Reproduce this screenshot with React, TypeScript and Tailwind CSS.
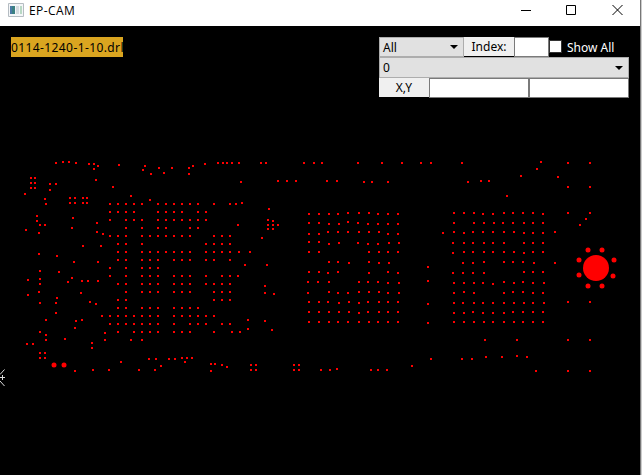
import React from "react";

/** Drill holes of the board, keyed by the top edge of each 2px mark. */
const SCATTER: [number, number[]][] = [
  [161, [62, 68, 540]],
  [162, [55, 75, 217, 222, 226, 231, 238, 260, 265, 303, 313, 321, 357, 381, 401, 420, 430, 461, 567, 589]],
  [163, [88, 93, 204]],
  [164, [118]],
  [165, [97, 144, 192]],
  [167, [158, 171, 188]],
  [168, [93, 536]],
  [169, [142]],
  [172, [163]],
  [173, [150, 188]],
  [175, [520]],
  [176, [557]],
  [177, [30, 34]],
  [179, [95]],
  [180, [277, 286, 295, 326, 336, 480, 488]],
  [181, [240, 363, 371, 387, 467]],
  [182, [30, 34]],
  [183, [49, 55]],
  [186, [112, 567, 589]],
  [187, [30, 34]],
  [189, [49]],
  [193, [24]],
  [195, [130, 506]],
  [197, [69, 74, 82, 86]],
  [198, [44]],
  [199, [149]],
  [202, [69, 74, 82, 86, 241]],
  [203, [45, 235]],
  [208, [268]],
  [212, [347, 358, 368, 453, 463, 473, 503, 512, 522, 532, 567, 589]],
  [213, [308, 318, 328, 337, 377, 387, 397, 482, 492, 542]],
  [215, [36]],
  [217, [72]],
  [218, [585]],
  [219, [267]],
  [220, [36, 272]],
  [221, [347]],
  [222, [96, 308, 318, 357, 453, 473, 483, 493, 502, 512, 523, 532, 542]],
  [223, [328, 338, 367, 377, 387, 397]],
  [224, [39, 44, 237, 267, 272, 277, 579]],
  [227, [71]],
  [228, [267, 272]],
  [229, [25]],
  [231, [96, 327, 337, 347, 358, 368, 378, 453, 472, 482, 492, 503, 513, 554]],
  [232, [38, 442, 463, 523, 532, 542]],
  [233, [102, 308, 318, 387, 397]],
  [237, [261]],
  [241, [308, 318]],
  [242, [338, 357, 388, 398, 452, 463, 472, 483, 492, 503, 523, 532, 542]],
  [243, [328, 367, 377]],
  [245, [82, 100]],
  [251, [238, 249, 308, 318, 368, 378, 387, 397, 463, 472, 483, 492, 503, 513, 532, 542]],
  [252, [452, 523]],
  [253, [38]],
  [255, [56]],
  [261, [73, 97, 328, 337, 368, 483, 503, 512, 522]],
  [262, [348, 378, 388, 462, 472, 533, 554]],
  [264, [244, 266]],
  [266, [427]],
  [270, [39]],
  [271, [58, 308, 318, 337, 387, 523, 532, 542]],
  [272, [327, 368, 397, 452, 462, 472, 483]],
  [275, [237]],
  [277, [71]],
  [278, [39]],
  [279, [27]],
  [280, [81, 87, 97, 427]],
  [281, [67, 307, 317, 328, 358, 367, 377, 503, 522]],
  [282, [387, 398, 453, 463, 473, 482, 513, 532, 543]],
  [283, [39, 492]],
  [285, [264]],
  [291, [38, 328, 358, 368, 378, 463, 512, 522]],
  [292, [80, 264, 307, 337, 347, 387, 398, 453, 473, 503, 532, 542]],
  [293, [273]],
  [294, [27]],
  [297, [56]],
  [301, [89, 308, 318, 327, 348, 367, 378, 387, 397, 567, 589]],
  [302, [39, 55, 338, 358, 453, 462, 473, 482, 492, 503, 513, 523, 532, 543]],
  [303, [95, 427]],
  [311, [308, 318, 328, 338, 348, 367, 378, 387, 397, 472, 512, 522, 532, 542]],
  [312, [55, 358, 453, 463, 482, 492, 503]],
  [315, [101]],
  [319, [45, 81, 247]],
  [320, [75, 264]],
  [321, [308, 318, 328, 337, 347, 358, 368, 377, 387, 397, 453, 463, 473, 483, 492, 503, 513, 522, 532, 542]],
  [322, [427]],
  [327, [74]],
  [328, [247]],
  [329, [271]],
  [331, [39, 231, 239]],
  [332, [104]],
  [334, [45]],
  [338, [64]],
  [339, [45, 104, 130, 141, 484, 516, 567, 589]],
  [342, [91]],
  [343, [26, 32]],
  [347, [91]],
  [352, [39, 44]],
  [355, [516]],
  [356, [485, 501, 526]],
  [357, [39, 44, 181, 186, 191]],
  [358, [148, 155, 168, 174, 430, 461, 471]],
  [361, [120, 184]],
  [363, [210, 214]],
  [364, [221, 250, 255, 293, 298]],
  [365, [160, 411]],
  [366, [226]],
  [368, [336]],
  [369, [92, 108, 138, 154, 250, 255, 293, 298, 320, 329, 370, 377, 386]],
  [370, [74, 210, 535, 567, 589]],
];

/** Ball grid on the left: 8px pitch, starting at (109, 203). */
const GRID = [
  "#####.######.#.#",
  "####..####.##...",
  "#.###.#######...",
  "..#.#.##..##....",
  "###.#######..###",
  ".##.#.......####",
  ".##.#######.####",
  ".##.###.###.##.#",
  "#.#.###.........",
  "#.#.###.###.#.##",
  ".##.###.###.####",
  "..#.###.###..###",
  ".##..........###",
  ".##.###.####....",
  "#######.######..",
  "#######.#.###.##",
  ".#.####.###..#..",
];

const PADS = [
  [54, 365], [64, 365], [588, 250], [602, 250], [579, 260],
  [614, 260], [579, 275], [613, 276], [588, 286], [602, 286],
];

function DrillPlot() {
  const marks = SCATTER.flatMap(([y, xs]) => xs.map((x) => [x, y]));
  GRID.forEach((row, j) =>
    [...row].forEach((c, i) => {
      if (c === "#") marks.push([109 + i * 8, 203 + j * 8]);
    })
  );
  return (
    <svg className="block h-[377px] w-[640px]" viewBox="0 98 640 377">
      <path
        fill="#f00"
        shapeRendering="crispEdges"
        d={marks.map(([x, y]) => `M${x} ${y}h2v2h-2z`).join("")}
      />
      {PADS.map(([x, y]) => (
        <circle key={`${x}-${y}`} cx={x} cy={y} r="2.5" fill="#f00" />
      ))}
      <circle cx="596" cy="268" r="13" fill="#f00" />
      <path d="M0 374.5L4.500 369.5M0 377.5H5M0 381L4.5 386M2.5 375V380" stroke="#ddd" fill="none" />
    </svg>
  );
}

function Select({ value, className }: { value: string; className: string }) {
  return (
    <div className={`flex items-center justify-between border border-[#adadad] bg-[#e1e1e1] pl-[3px] ${className}`}>
      <span className="pt-px">{value}</span>
      <svg className="mr-[5px] h-1 w-[8px]" viewBox="0 0 8 4">
        <path d="M0 0h8L4 4z" />
      </svg>
    </div>
  );
}

export default function App() {
  return (
    <div className="flex h-[475px] w-[642px] overflow-hidden bg-black font-['Noto_Sans',sans-serif] text-[12px] leading-[18px] text-black">
      <div className="flex w-[640px] flex-col">
        <header className="flex h-[26px] shrink-0 items-center bg-white pl-2">
          <svg className="mb-[6px] h-[14px] w-4" viewBox="0 0 16 14">
            <path d="M.5.5h15v13H.5z" fill="#f4f6f8" stroke="#b5bcc2" />
            <path d="M2 3h5v8H2z" fill="#3b8082" />
            <path d="M2 3h2v8H2z" fill="#4c79a6" />
            <path d="M8 3h3v8H8z" fill="#d5dce0" />
            <path d="M12 3h2v8h-2z" fill="#b8d8c4" />
          </svg>
          <span className="mb-[5px] ml-[5px] font-['Open_Sans',sans-serif] text-[12px] tracking-[0.4px]">EP-CAM</span>
          <svg className="mb-[6px] ml-auto mr-4 h-[12px] w-[103px]" viewBox="0 0 103 12" fill="none" stroke="#000">
            <path d="M0 6.5h10M45.5 1.5h9v9h-9z" />
            <path d="M91.5 1l10 10M101.5 1l-10 10" />
          </svg>
        </header>
        <section className="flex h-[72px] shrink-0 items-start justify-between px-[11px] pt-[11px]">
          <div className="h-5 w-28 overflow-hidden whitespace-nowrap bg-[#daa520] leading-[22px] tracking-[0.4px]">
            0114-1240-1-10.drl
          </div>
          <div className="w-[250px]">
            <div className="flex h-5">
              <Select value="All" className="h-5 w-[85px]" />
              <div className="h-[19px] w-[50px] bg-[#f0f0f0] text-center leading-5">Index:</div>
              <div className="h-5 w-[35px] border border-[#7a7a7a] bg-white" />
              <div className="mt-[3px] h-[13px] w-[13px] border border-[#333] bg-white" />
              <span className="ml-[5px] mt-[2px] whitespace-nowrap text-white">Show All</span>
            </div>
            <Select value="0" className="h-[21px] w-full" />
            <div className="flex h-5">
              <div className="h-[19px] w-[50px] bg-[#f0f0f0] text-center leading-5">X,Y</div>
              <div className="h-5 w-[100px] border border-[#7a7a7a] bg-white" />
              <div className="h-5 w-[100px] border border-[#7a7a7a] bg-white" />
            </div>
          </div>
        </section>
        <DrillPlot />
      </div>
      <div className="w-px bg-[#777]" />
      <div className="w-px bg-[#ccc]" />
    </div>
  );
}
